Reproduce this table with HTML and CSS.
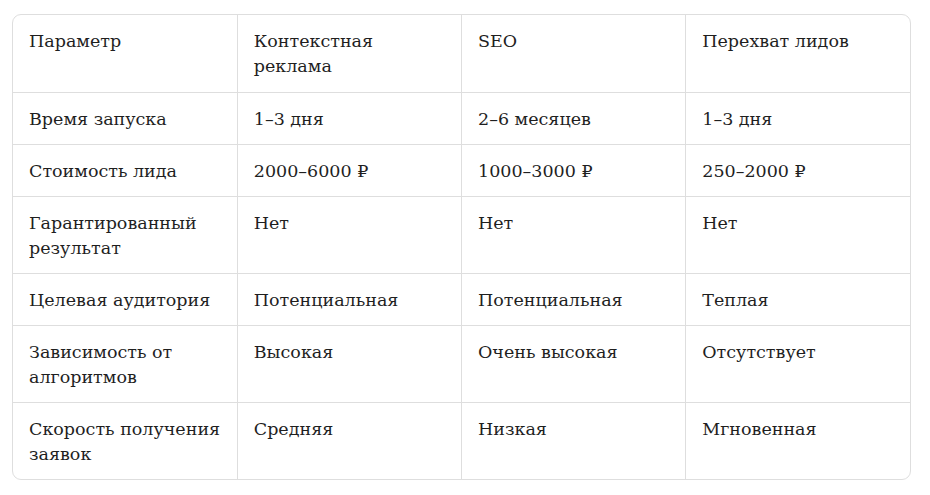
FILE: index.html
```html
<!DOCTYPE html>
<html lang="ru">
<head>
<meta charset="utf-8">
<link rel="stylesheet" href="styles.css">
</head>
<body>
<div class="wrap">
<table class="cmp">
<thead>
<tr><th>Параметр</th><th>Контекстная реклама</th><th>SEO</th><th>Перехват лидов</th></tr>
</thead>
<tbody>
<tr><td>Время запуска</td><td>1–3 дня</td><td>2–6 месяцев</td><td>1–3 дня</td></tr>
<tr><td>Стоимость лида</td><td>2000–6000 ₽</td><td>1000–3000 ₽</td><td>250–2000 ₽</td></tr>
<tr><td>Гарантированный результат</td><td>Нет</td><td>Нет</td><td>Нет</td></tr>
<tr><td>Целевая аудитория</td><td>Потенциальная</td><td>Потенциальная</td><td>Теплая</td></tr>
<tr><td>Зависимость от алгоритмов</td><td>Высокая</td><td>Очень высокая</td><td>Отсутствует</td></tr>
<tr><td>Скорость получения заявок</td><td>Средняя</td><td>Низкая</td><td>Мгновенная</td></tr>
</tbody>
</table>
</div>
</body>
</html>
```
FILE: styles.css
```css
html, body {
  margin: 0;
  background: #ffffff;
}
body {
  padding: 14px 19px 0 12px;
  font-family: "DejaVu Serif", serif;
  color: #1f1f1f;
}
.wrap {
  width: 899px;
  border: 1px solid #dedede;
  border-radius: 9px;
  overflow: hidden;
  box-sizing: border-box;
}
.cmp {
  width: 100%;
  border-collapse: collapse;
  table-layout: fixed;
}
.cmp th, .cmp td {
  text-align: left;
  vertical-align: top;
  font-weight: normal;
  font-size: 17.5px;
  line-height: 25px;
  padding: 14px 16px 12px 16px;
  border-left: 1px solid #dedede;
  border-top: 1px solid #dedede;
}
.cmp th { padding-bottom: 13px; }
.cmp tr > :first-child { border-left: none; }
.cmp thead th { border-top: none; }
.cmp thead tr { border-bottom: 1px solid #dedede; }
```
